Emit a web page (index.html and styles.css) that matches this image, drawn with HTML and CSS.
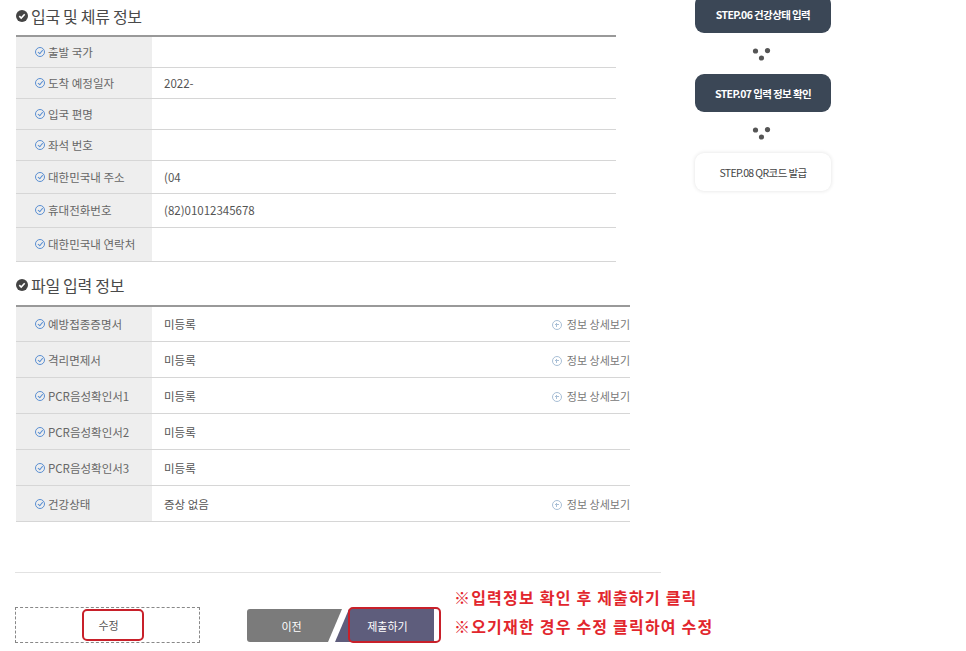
FILE: index.html
```html
<!DOCTYPE html>
<html>
<head>
  <title>입력 정보 확인</title>
  <link rel="stylesheet" href="styles.css">
</head>
<body>
  <div class="page">
    <div class="main">
      <h3 class="section-title">
        <svg class="title-icon" viewBox="0 0 12 12"><circle cx="6" cy="6" r="6" fill="#444"/><polyline points="3.3,6.2 5.2,8 8.7,4.3" fill="none" stroke="#fff" stroke-width="1.6"/></svg>
        입국 및 체류 정보
      </h3>
      <table class="info-table entry">
        <tr><th><span class="chk"></span>출발 국가</th><td></td></tr>
        <tr><th><span class="chk"></span>도착 예정일자</th><td>2022-</td></tr>
        <tr><th><span class="chk"></span>입국 편명</th><td></td></tr>
        <tr><th><span class="chk"></span>좌석 번호</th><td></td></tr>
        <tr><th><span class="chk"></span>대한민국내 주소</th><td>(04</td></tr>
        <tr class="tall"><th><span class="chk"></span>휴대전화번호</th><td>(82)01012345678</td></tr>
        <tr class="tall"><th><span class="chk"></span>대한민국내 연락처</th><td></td></tr>
      </table>

      <h3 class="section-title second">
        <svg class="title-icon" viewBox="0 0 12 12"><circle cx="6" cy="6" r="6" fill="#444"/><polyline points="3.3,6.2 5.2,8 8.7,4.3" fill="none" stroke="#fff" stroke-width="1.6"/></svg>
        파일 입력 정보
      </h3>
      <table class="info-table files">
        <tr><th><span class="chk"></span>예방접종증명서</th><td>미등록</td><td class="more"><span class="plus"></span>정보 상세보기</td></tr>
        <tr><th><span class="chk"></span>격리면제서</th><td>미등록</td><td class="more"><span class="plus"></span>정보 상세보기</td></tr>
        <tr><th><span class="chk"></span>PCR음성확인서1</th><td>미등록</td><td class="more"><span class="plus"></span>정보 상세보기</td></tr>
        <tr><th><span class="chk"></span>PCR음성확인서2</th><td>미등록</td><td class="more"></td></tr>
        <tr><th><span class="chk"></span>PCR음성확인서3</th><td>미등록</td><td class="more"></td></tr>
        <tr><th><span class="chk"></span>건강상태</th><td>증상 없음</td><td class="more"><span class="plus"></span>정보 상세보기</td></tr>
      </table>

      <div class="divider"></div>

      <div class="bottom">
        <div class="edit-box">
          <span class="btn-edit">수정</span>
          <span class="mark mark-edit"></span>
        </div>
        <div class="nav-btns">
          <a href="#" class="btn-prev">이전</a>
          <a href="#" class="btn-submit">제출하기</a>
          <span class="mark mark-submit"></span>
        </div>
        <div class="notice">
          <p>※입력정보 확인 후 제출하기 클릭</p>
          <p>※오기재한 경우 수정 클릭하여 수정</p>
        </div>
      </div>
    </div>

    <div class="side">
      <div class="step done">STEP.06 건강상태 입력</div>
      <div class="dots"><svg viewBox="0 0 20 14" width="20" height="14"><circle cx="3.5" cy="4" r="2.6"/><circle cx="15.5" cy="3.6" r="2.6"/><circle cx="9.5" cy="11" r="2.6"/></svg></div>
      <div class="step done">STEP.07 입력 정보 확인</div>
      <div class="dots"><svg viewBox="0 0 20 14" width="20" height="14"><circle cx="3.5" cy="4" r="2.6"/><circle cx="15.5" cy="3.6" r="2.6"/><circle cx="9.5" cy="11" r="2.6"/></svg></div>
      <div class="step">STEP.08 QR코드 발급</div>
    </div>
  </div>
</body>
</html>
```

FILE: styles.css
```css
body {
  margin: 0;
  background: #fff;
  font-family: "Noto Sans CJK KR", "Noto Sans", sans-serif;
  color: #555;
}

.page {
  display: flex;
  align-items: flex-start;
  padding-left: 16px;
}

.main {
  width: 645px;
  flex-shrink: 0;
}

.section-title {
  display: flex;
  align-items: center;
  height: 22px;
  margin: 5px 0 8px 0;
  font-size: 16px;
  font-weight: normal;
  color: #4a4a4a;
  letter-spacing: -0.3px;
}
.section-title.second {
  margin: 12px 0 9px 0;
}
.title-icon {
  width: 12px;
  height: 12px;
  margin-right: 3px;
}

.info-table {
  border-collapse: collapse;
  border-top: 2px solid #999;
  font-size: 11.5px;
}
.info-table.entry {
  width: 600px;
}
.info-table.files {
  width: 614px;
}
.info-table th,
.info-table td {
  border-bottom: 1px solid #d6d6d6;
  padding: 0;
  text-align: left;
  font-weight: normal;
}
.info-table th {
  width: 117px;
  padding-left: 19px;
  background: #eeeeee;
  color: #666;
}
.info-table td {
  padding-left: 12px;
  color: #555;
}
.entry tr {
  height: 31px;
}
.entry tr:nth-child(5) {
  height: 33px;
}
.entry tr.tall {
  height: 34px;
}
.files tr {
  height: 36px;
}
.info-table td.more {
  width: 100px;
  padding: 0;
  text-align: right;
  color: #777;
  font-size: 11px;
  white-space: nowrap;
}

.chk {
  display: inline-block;
  width: 8px;
  height: 8px;
  border: 1px solid #5a8fd2;
  border-radius: 50%;
  margin-right: 3px;
  position: relative;
}
.chk::after {
  content: "";
  position: absolute;
  left: 2.5px;
  top: 1.2px;
  width: 2px;
  height: 3.5px;
  border: solid #5a8fd2;
  border-width: 0 1px 1px 0;
  transform: rotate(40deg);
}

.plus {
  display: inline-block;
  position: relative;
  width: 8px;
  height: 8px;
  border: 1px solid #a9bfd6;
  border-radius: 50%;
  margin-right: 5px;
  vertical-align: -1px;
}
.plus::before,
.plus::after {
  content: "";
  position: absolute;
  background: #a9bfd6;
}
.plus::before {
  left: 2px;
  top: 3.5px;
  width: 4px;
  height: 1px;
}
.plus::after {
  left: 3.5px;
  top: 2px;
  width: 1px;
  height: 4px;
}

.divider {
  height: 1px;
  background: #e2e2e2;
  margin-top: 50px;
  margin-left: -1px;
}

.bottom {
  display: flex;
  align-items: flex-start;
  margin-top: 15px;
}
.bottom > * {
  flex-shrink: 0;
}

.edit-box {
  position: relative;
  width: 183px;
  height: 34px;
  margin-top: 19px;
  margin-left: -1px;
  border: 1px dashed #888;
  display: flex;
  align-items: center;
  justify-content: center;
}
.btn-edit {
  font-size: 11px;
  color: #555;
  margin-left: 2px;
}

.nav-btns {
  position: relative;
  display: flex;
  margin-left: 47px;
  margin-top: 21px;
}
.nav-btns a {
  display: flex;
  align-items: center;
  justify-content: center;
  height: 33px;
  font-size: 11px;
  color: #fff;
  text-decoration: none;
}
.btn-prev {
  width: 95px;
  background: #7b7b7b;
  border-radius: 3px 0 0 3px;
  clip-path: polygon(0 0, 100% 0, calc(100% - 14px) 100%, 0 100%);
  padding-right: 6px;
  box-sizing: border-box;
}
.btn-submit {
  width: 99px;
  margin-left: -7px;
  background: #5e5d7c;
  clip-path: polygon(14px 0, 100% 0, 100% 100%, 0 100%);
  padding-left: 6px;
  box-sizing: border-box;
}

.mark {
  position: absolute;
  border: 2px solid #c8202a;
  border-radius: 5px;
}
.mark-edit {
  left: 66px;
  top: 1px;
  width: 58px;
  height: 28px;
}
.mark-submit {
  left: 101px;
  top: -2px;
  width: 89px;
  height: 32px;
}

.notice {
  margin-left: 20px;
  margin-top: -5px;
  white-space: nowrap;
}
.notice p {
  margin: 0;
  line-height: 29px;
  font-size: 16px;
  font-weight: bold;
  letter-spacing: 1.2px;
  color: #e2262d;
}

.side {
  width: 136px;
  margin-left: 34px;
  margin-top: -5px;
}
.step {
  height: 38px;
  border-radius: 9px;
  display: flex;
  align-items: center;
  justify-content: center;
  font-size: 10.5px;
  letter-spacing: -0.6px;
  background: #fff;
  color: #444;
  box-shadow: 0 0 4px rgba(0, 0, 0, 0.12);
}
.step.done {
  background: #3b4756;
  color: #fff;
  font-weight: bold;
  box-shadow: none;
}
.dots {
  height: 41px;
  display: flex;
  align-items: center;
  justify-content: center;
}
.dots svg {
  fill: #555;
  margin-left: -3px;
}
```
